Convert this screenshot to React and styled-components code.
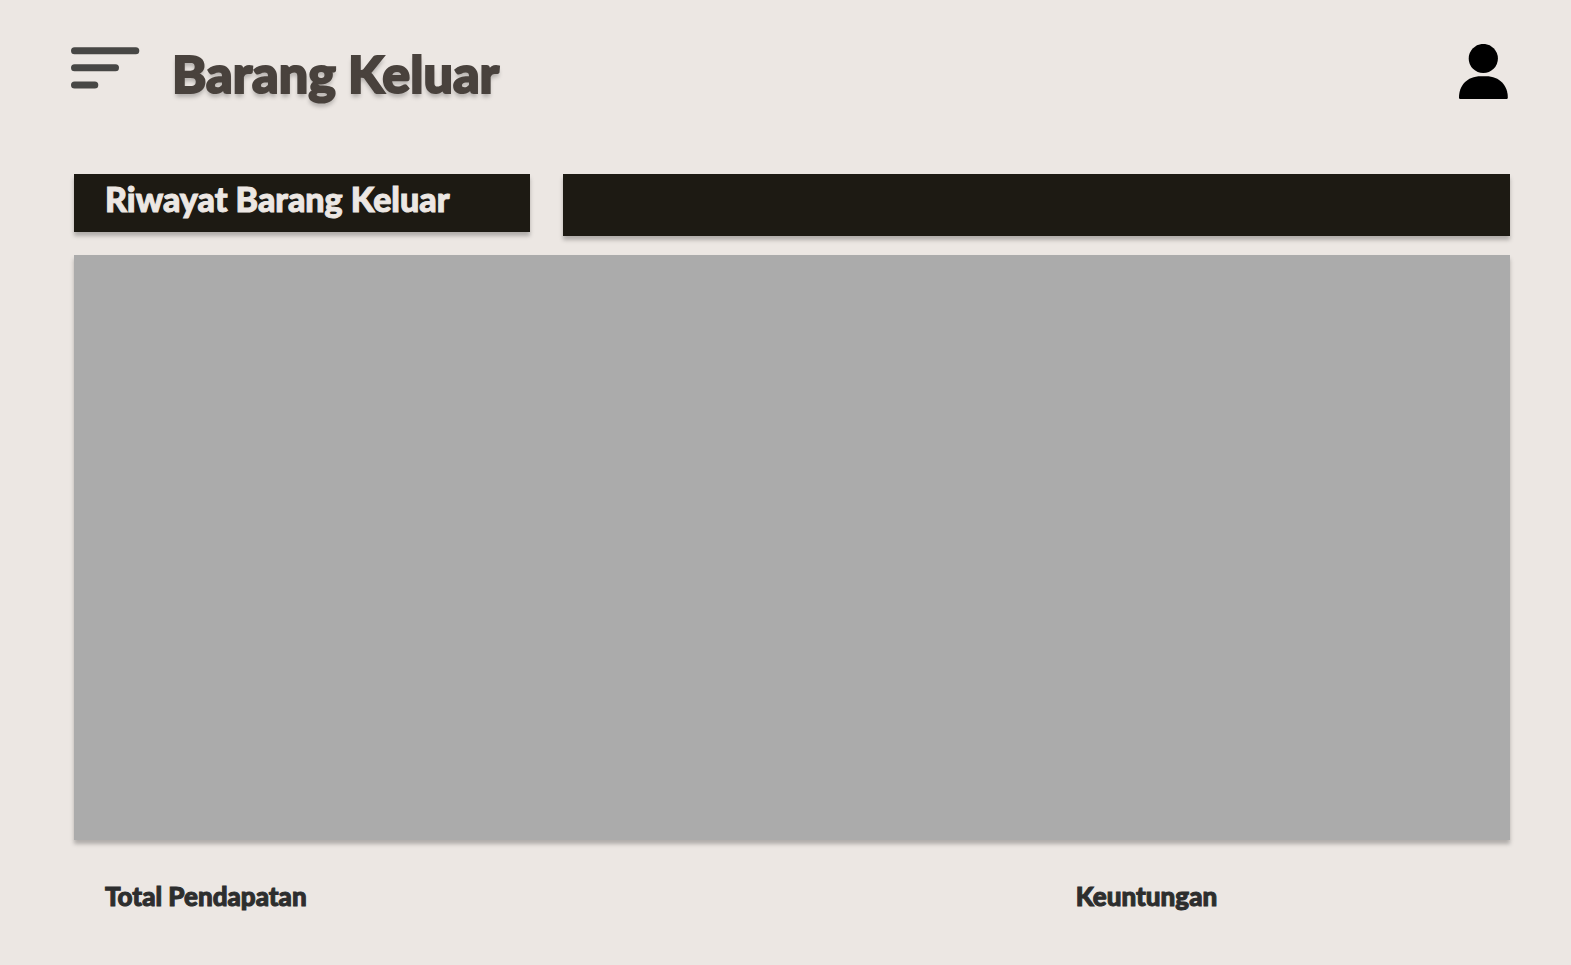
import React from "react";
import styled, { createGlobalStyle } from "styled-components";

const GlobalStyle = createGlobalStyle`
  *, *::before, *::after { box-sizing: border-box; }
  body {
    margin: 0;
    background: #ece7e3;
    font-family: "Fredoka One", Lato, "Open Sans", sans-serif;
    font-weight: 900;
  }
`;

const Page = styled.div`
  min-height: 100vh;
  display: flex;
  flex-direction: column;
  padding: 44px 61px 0 74px;
`;

const Header = styled.header`
  display: flex;
  align-items: flex-start;
  height: 130px;
`;

const IconButton = styled.button`
  display: block;
  flex: none;
  padding: 0;
  border: 0;
  background: none;
  color: ${({ $color }) => $color};
  cursor: pointer;

  svg { display: block; }
`;

const MenuButton = styled(IconButton)`
  margin: 3px 0 0 -3px;
`;

const Title = styled.h1`
  margin: 0 auto 0 32px;
  font-size: 52px;
  line-height: 58px;
  font-weight: 900;
  color: #49423d;
  -webkit-text-stroke: 2px currentColor;
  text-shadow: 0 4px 4px rgba(0, 0, 0, 0.25);
`;

const Bars = styled.div`
  display: grid;
  grid-template-columns: 456fr 947fr;
  gap: 33px;
  align-items: start;
  height: 81px;
`;

const Bar = styled.div`
  height: ${({ $height }) => $height}px;
  padding: 0 31px;
  background: #1d1a13;
  box-shadow: 0 4px 4px rgba(0, 0, 0, 0.25);
`;

const BarTitle = styled.h2`
  margin: 0;
  font-size: 34px;
  line-height: 50px;
  font-weight: 900;
  white-space: nowrap;
  color: #ece7e3;
  -webkit-text-stroke: 1px currentColor;
`;

const Panel = styled.main`
  flex: 1;
  min-height: 240px;
  background: #ababab;
  box-shadow: 0 4px 4px rgba(0, 0, 0, 0.25);
`;

const Summary = styled.footer`
  display: grid;
  grid-template-columns: 970fr 434fr;
  height: 125px;
  padding: 40px 0 0 31px;
`;

const SummaryLabel = styled.p`
  margin: 0;
  font-size: 26px;
  line-height: 32px;
  color: #2d2e2e;
  -webkit-text-stroke: 1px currentColor;
`;

export default function App() {
  return (
    <>
      <GlobalStyle />
      <Page>
        <Header>
          <MenuButton type="button" aria-label="Menu" $color="#474745">
            <svg width="69" height="42" viewBox="0 0 69 42" fill="currentColor">
              <rect x="0" y="0.3" width="68.3" height="7" rx="3.5" />
              <rect x="0" y="17.3" width="48" height="7" rx="3.5" />
              <rect x="0" y="34.5" width="27.3" height="7" rx="3.5" />
            </svg>
          </MenuButton>
          <Title>Barang Keluar</Title>
          <IconButton type="button" aria-label="Profil" $color="#000000">
            <svg width="51" height="55" viewBox="0 0 51 55" fill="currentColor">
              <circle cx="24.3" cy="14.5" r="14.6" />
              <path d="M0 53.2C0 42 7.5 32.2 22 32.2H27C41 32.2 48.8 42 48.8 53.2C48.8 54.4 48.4 55 47.5 55H1.3C0.4 55 0 54.4 0 53.2Z" />
            </svg>
          </IconButton>
        </Header>
        <Bars>
          <Bar $height={58}>
            <BarTitle>Riwayat Barang Keluar</BarTitle>
          </Bar>
          <Bar $height={62} />
        </Bars>
        <Panel />
        <Summary>
          <SummaryLabel>Total Pendapatan</SummaryLabel>
          <SummaryLabel>Keuntungan</SummaryLabel>
        </Summary>
      </Page>
    </>
  );
}
